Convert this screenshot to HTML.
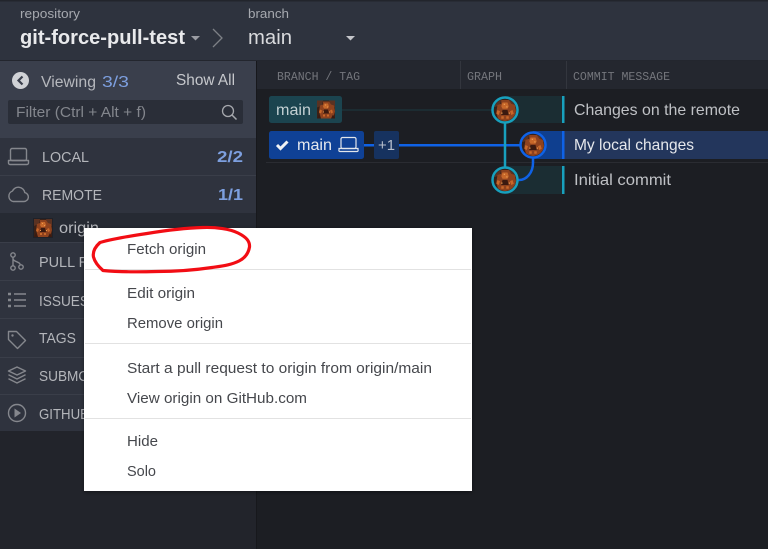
<!DOCTYPE html>
<html>
<head>
<meta charset="utf-8">
<style>
html,body{margin:0;padding:0;width:768px;height:549px;overflow:hidden;background:#1c1e23}
svg{display:block;filter:blur(.35px)}
text{font-family:"Liberation Sans",sans-serif;font-size:16px}
.m{font-family:"Liberation Mono",monospace;font-size:11.5px;fill:#74767c}
.s{fill:#b4b6bb;font-size:15px}
.c{fill:#45474c;font-size:15px}
.i{fill:none;stroke:#85878d;stroke-width:1.4;stroke-linecap:round;stroke-linejoin:round}
</style>
</head>
<body>
<svg width="768" height="549" viewBox="0 0 768 549" xmlns="http://www.w3.org/2000/svg">
<defs>
<g id="av">
<rect x="-9" y="-9" width="18" height="18" fill="#3a2016"/>
<path d="M-9-9h6l-1 5-5 2zM9-9H3l1 5 5 2z" fill="#5a3222"/>
<path d="M-3-8h6l2 3 3 1 1 6-2 7H-5l-2-7 1-6 3-1z" fill="#8e421e"/>
<path d="M-2-6h4l1 3-1 2h-4l-1-2zM-6 0l2 1-1 3-2-1zM6 0l-2 1 1 3 2-1zM-3 5h2v2h-2zM1 5h2v2H1z" fill="#c8682a"/>
<path d="M-2 0h4l1 4H-3zM-7 5l2 4h-4zM7 5l-2 4h4z" fill="#3b1a10"/>
<path d="M-1-5h1v1h-1zM1-3h1v1H1zM-3 2h1v1h-1zM3 2h1v1H3z" fill="#e99a50"/>
</g>
<clipPath id="cc"><circle r="11"/></clipPath>
<filter id="sh" x="-5%" y="-5%" width="110%" height="110%"><feDropShadow dx="0" dy="1" stdDeviation="2" flood-color="#000" flood-opacity=".45"/></filter>
</defs>

<!-- background regions -->
<rect width="768" height="549" fill="#1c1e23"/>
<rect width="768" height="61" fill="#2e333e"/>
<rect width="768" height="1.500" fill="#22252c"/>
<rect y="60" width="768" height="1" fill="#23262e"/>
<rect y="61" width="256" height="77" fill="#3a3f4c"/>
<rect y="138" width="256" height="293" fill="#2f333e"/>
<rect y="431" width="256" height="118" fill="#22242b"/>
<rect x="256" y="61" width="1" height="488" fill="#17181c"/>

<!-- top bar -->
<text x="20" y="18" textLength="60" lengthAdjust="spacingAndGlyphs" style="font-size:12.500px" fill="#a6a9af">repository</text>
<text x="20" y="44" textLength="165" lengthAdjust="spacingAndGlyphs" style="font-size:20.500px;font-weight:700" fill="#e9eaec">git-force-pull-test</text>
<path d="M191 36h9l-4.500 4.500z" fill="#9b9da3"/>
<path d="M213 29l9 9-9 9" fill="none" stroke="#7d8086" stroke-width="1.300"/>
<text x="248" y="18" textLength="41" lengthAdjust="spacingAndGlyphs" style="font-size:12.500px" fill="#a6a9af">branch</text>
<text x="248" y="44" textLength="44" lengthAdjust="spacingAndGlyphs" style="font-size:20px" fill="#d9dadd">main</text>
<path d="M346 36h9l-4.500 4.500z" fill="#c4c6ca"/>

<!-- sidebar head -->
<circle cx="20.500" cy="80.500" r="8.500" fill="#d0d2d6"/>
<path d="M22.500 76.500l-4 4 4 4" fill="none" stroke="#3a3f4c" stroke-width="2.200"/>
<text x="41" y="87" textLength="55" lengthAdjust="spacingAndGlyphs" style="font-size:15.500px" fill="#b6b8bd">Viewing</text>
<text x="102" y="87" textLength="27" lengthAdjust="spacingAndGlyphs" style="font-size:15.500px" fill="#7d9fdf">3/3</text>
<text x="176" y="85" textLength="59" lengthAdjust="spacingAndGlyphs" style="font-size:15.500px" fill="#c6c8cc">Show All</text>
<rect x="8" y="100" width="235" height="24" rx="2" fill="#2a2e38"/>
<text x="16" y="117" textLength="130" lengthAdjust="spacingAndGlyphs" style="font-size:14.500px" fill="#83868d">Filter (Ctrl + Alt + f)</text>
<circle cx="228" cy="111" r="5.500" fill="none" stroke="#a6a8ad" stroke-width="1.300"/>
<path d="M232 115l4.500 4.500" stroke="#a6a8ad" stroke-width="1.500"/>

<!-- sidebar rows -->
<rect y="175" width="256" height="1" fill="#3a3e49"/>
<rect y="213" width="256" height="29" fill="#262a33"/>
<rect y="242" width="256" height="1" fill="#3a3e49"/>
<rect y="280" width="256" height="1" fill="#3a3e49"/>
<rect y="318" width="256" height="1" fill="#3a3e49"/>
<rect y="357" width="256" height="1" fill="#3a3e49"/>
<rect y="394" width="256" height="1" fill="#3a3e49"/>

<rect class="i" x="10.500" y="148.500" width="16" height="12" rx="1.500"/>
<path class="i" d="M8.500 160.500h20v2.500a1.500 1.500 0 0 1-1.500 1.500h-17a1.500 1.500 0 0 1-1.500-1.500z"/>
<text class="s" x="42" y="162" textLength="47" lengthAdjust="spacingAndGlyphs">LOCAL</text>
<text x="217" y="162" textLength="26" lengthAdjust="spacingAndGlyphs" style="font-size:15.500px;font-weight:700" fill="#7d9fdf">2/2</text>

<path class="i" d="M13 201.500h11a4.500 4.500 0 0 0 .8-8.900 6.500 6.500 0 0 0-12.300-1.600 5.500 5.500 0 0 0 .5 10.500z"/>
<text class="s" x="42" y="200" textLength="60" lengthAdjust="spacingAndGlyphs">REMOTE</text>
<text x="218" y="200" textLength="25" lengthAdjust="spacingAndGlyphs" style="font-size:15.500px;font-weight:700" fill="#7d9fdf">1/1</text>

<g transform="translate(43,228)"><rect x="-10" y="-10" width="20" height="20" fill="#1f2128"/><use href="#av"/></g>
<text x="59" y="233" textLength="40" lengthAdjust="spacingAndGlyphs" style="font-size:15.500px" fill="#b4b6bb">origin</text>

<circle class="i" cx="13" cy="255" r="2.200"/><circle class="i" cx="13" cy="268" r="2.200"/><circle class="i" cx="21" cy="267" r="2.200"/>
<path class="i" d="M13 257.500v8M13 259c1 3 5 2 7 5"/>
<text class="s" x="39" y="267" textLength="50" lengthAdjust="spacingAndGlyphs">PULL R</text>

<path d="M8 294h3M8 300h3M8 306h3" stroke="#85878d" stroke-width="2.500"/>
<path d="M14 294h12M14 300h12M14 306h12" stroke="#85878d" stroke-width="1.400"/>
<text class="s" x="39" y="306" textLength="50" lengthAdjust="spacingAndGlyphs">ISSUES</text>

<path class="i" d="M8.500 331.500h8l9 9-8 8-9-9z"/><circle cx="12.500" cy="335.500" r="1.200" fill="#85878d"/>
<text class="s" x="39" y="343" textLength="37" lengthAdjust="spacingAndGlyphs">TAGS</text>

<path class="i" d="M17 367l8.500 4-8.500 4-8.500-4zM9 375l8 4 8-4M9 379l8 4 8-4"/>
<text class="s" x="39" y="381" textLength="50" lengthAdjust="spacingAndGlyphs">SUBMO</text>

<circle class="i" cx="17" cy="413" r="8.500"/><path d="M14.500 408.500l6.500 4.500-6.500 4.500z" fill="#85878d"/>
<text class="s" x="39" y="419" textLength="50" lengthAdjust="spacingAndGlyphs">GITHUB</text>

<!-- graph header -->
<rect x="257" y="61" width="511" height="28" fill="#24272f"/>
<rect x="460" y="61" width="1" height="28" fill="#33363e"/>
<rect x="566" y="61" width="1" height="28" fill="#33363e"/>
<text class="m" x="277" y="80" textLength="83" lengthAdjust="spacingAndGlyphs">BRANCH / TAG</text>
<text class="m" x="467" y="80" textLength="35" lengthAdjust="spacingAndGlyphs">GRAPH</text>
<text class="m" x="573" y="80" textLength="97" lengthAdjust="spacingAndGlyphs">COMMIT MESSAGE</text>

<!-- row tints -->
<rect x="505" y="96" width="57" height="27" fill="#1b2d33"/>
<rect x="533" y="131" width="235" height="28" fill="#23365c"/>
<rect x="533" y="131" width="29" height="28" fill="#0f3f8f"/>
<rect x="505" y="166" width="57" height="28" fill="#1b2d33"/>
<rect x="562" y="96" width="2.500" height="27" fill="#18a0bd"/>
<rect x="562" y="131" width="2.500" height="28" fill="#0f62e6"/>
<rect x="562" y="166" width="2.500" height="28" fill="#18a0bd"/>
<rect x="266" y="162" width="502" height="1" fill="#2a2c32"/>

<!-- refs -->
<rect x="342" y="109.500" width="163" height="1" fill="#1d3a40"/>
<rect x="269" y="96" width="73" height="27" rx="2.500" fill="#1b444f"/>
<text x="276" y="115" textLength="35" lengthAdjust="spacingAndGlyphs" style="font-size:16px" fill="#c3d0d3">main</text>
<g transform="translate(326,109.500)"><use href="#av"/></g>

<rect x="364" y="144" width="169" height="2.500" fill="#0f62e6"/>
<rect x="269" y="131" width="95" height="28" rx="2.500" fill="#0f4196"/>
<path d="M277 145l3.500 3.500 7-7" fill="none" stroke="#f0f2f5" stroke-width="3"/>
<text x="297" y="150" textLength="35" lengthAdjust="spacingAndGlyphs" style="font-size:16px" fill="#e6e9ee">main</text>
<rect x="341" y="137.500" width="15" height="11" rx="1.500" fill="none" stroke="#e2e6ec" stroke-width="1.200"/>
<path d="M339 148.500h19v1.500a1 1 0 0 1-1 1.500h-17a1 1 0 0 1-1-1.500z" fill="none" stroke="#e2e6ec" stroke-width="1.200"/>
<rect x="374" y="131" width="25" height="28" rx="2" fill="#16325f"/>
<text x="378" y="150" textLength="17" lengthAdjust="spacingAndGlyphs" style="font-size:15px" fill="#b7bfcc">+1</text>

<!-- graph -->
<path d="M505 110v70" stroke="#18a0bd" stroke-width="2.500"/>
<path d="M533 145v18a14 17 0 0 1-14 17h-14" fill="none" stroke="#0f62e6" stroke-width="2.500"/>
<g transform="translate(505,110)"><circle r="12.500" fill="#1c1e23" stroke="#18a0bd" stroke-width="2.500"/><g clip-path="url(#cc)"><use href="#av" transform="scale(1.250)"/></g></g>
<g transform="translate(533,145)"><circle r="12.500" fill="#1c1e23" stroke="#0f62e6" stroke-width="2.500"/><g clip-path="url(#cc)"><use href="#av" transform="scale(1.250)"/></g></g>
<g transform="translate(505,180)"><circle r="12.500" fill="#1c1e23" stroke="#18a0bd" stroke-width="2.500"/><g clip-path="url(#cc)"><use href="#av" transform="scale(1.250)"/></g></g>

<!-- commit text -->
<text x="574" y="115" textLength="166" lengthAdjust="spacingAndGlyphs" style="font-size:16px" fill="#bfc1c5">Changes on the remote</text>
<text x="574" y="150" textLength="120" lengthAdjust="spacingAndGlyphs" style="font-size:16px" fill="#e6e8ec">My local changes</text>
<text x="574" y="185" textLength="97" lengthAdjust="spacingAndGlyphs" style="font-size:16px" fill="#bfc1c5">Initial commit</text>

<!-- context menu -->
<rect x="84" y="228" width="388" height="263" fill="#fff" filter="url(#sh)"/>
<rect x="85" y="269" width="386" height="1" fill="#e2e2e2"/>
<rect x="85" y="343" width="386" height="1" fill="#e2e2e2"/>
<rect x="85" y="418" width="386" height="1" fill="#e2e2e2"/>
<text class="c" x="127" y="254" textLength="79" lengthAdjust="spacingAndGlyphs">Fetch origin</text>
<text class="c" x="127" y="298" textLength="68" lengthAdjust="spacingAndGlyphs">Edit origin</text>
<text class="c" x="127" y="328" textLength="96" lengthAdjust="spacingAndGlyphs">Remove origin</text>
<text class="c" x="127" y="373" textLength="305" lengthAdjust="spacingAndGlyphs">Start a pull request to origin from origin/main</text>
<text class="c" x="127" y="403" textLength="180" lengthAdjust="spacingAndGlyphs">View origin on GitHub.com</text>
<text class="c" x="127" y="446" textLength="31" lengthAdjust="spacingAndGlyphs">Hide</text>
<text class="c" x="127" y="476" textLength="29" lengthAdjust="spacingAndGlyphs">Solo</text>

<!-- red scribble -->
<path d="M203 227.500C216 227 230 229 238 233C246 237 250 241 249.500 247C248.500 253 245 258 239 261C231 265 222 266 212 267.500C195 270 176 271.500 157 271.500C138 272 118 272 103 270.500C99 267 95 263 93.500 257C92.500 252 95 247 100 242.500C112 239 130 236 147 233.500C165 230.500 185 228 203 227.500Z" fill="none" stroke="#f20d14" stroke-width="3.200" stroke-linejoin="round"/>
</svg>
</body>
</html>
